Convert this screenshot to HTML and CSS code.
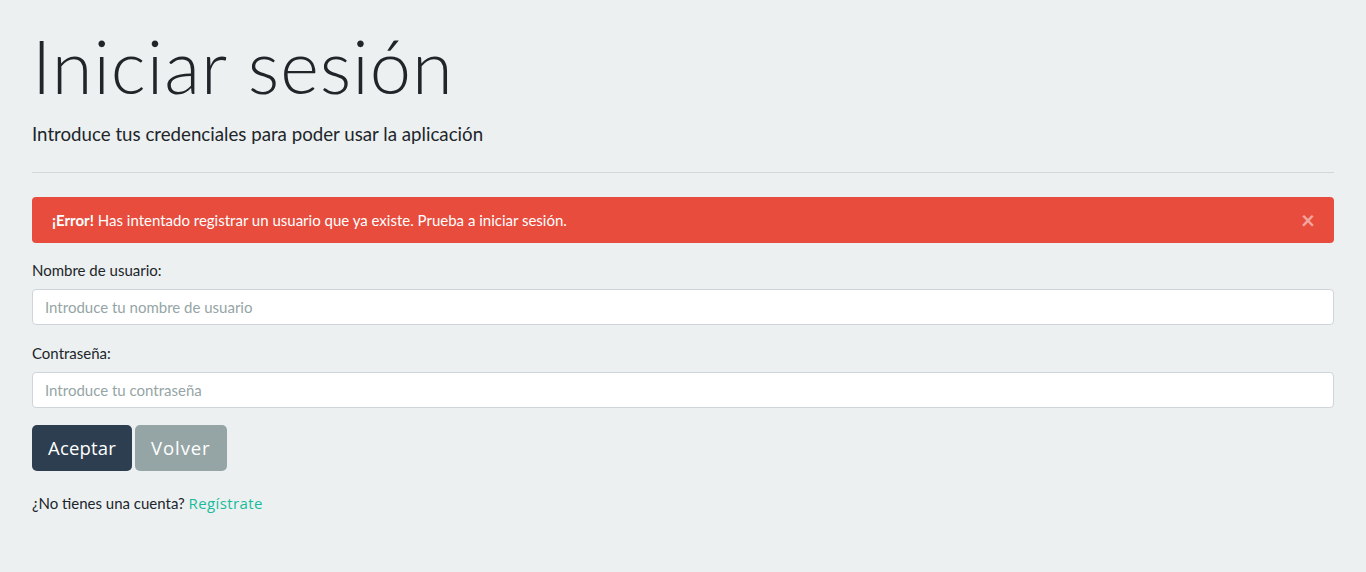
FILE: index.html
```html
<!DOCTYPE html>
<html lang="es">
<head>
<meta charset="utf-8">
<title>Iniciar sesión</title>
<link rel="stylesheet" href="styles.css">
</head>
<body>
<main class="jumbotron">
  <h1 class="title">Iniciar sesión</h1>
  <p class="lead">Introduce tus credenciales para poder usar la aplicación</p>
  <hr class="divider">
  <div class="alert">
    <span><strong>¡Error!</strong> Has intentado registrar un usuario que ya existe. Prueba a iniciar sesión.</span>
    <button class="close" type="button" aria-label="Cerrar">×</button>
  </div>
  <form class="form">
    <div class="group">
      <label class="label" for="user">Nombre de usuario:</label>
      <input class="control" id="user" type="text" placeholder="Introduce tu nombre de usuario">
    </div>
    <div class="group">
      <label class="label" for="pass">Contraseña:</label>
      <input class="control" id="pass" type="password" placeholder="Introduce tu contraseña">
    </div>
    <div class="actions">
      <button class="btn btn-primary" type="submit">Aceptar</button>
      <button class="btn btn-secondary" type="button">Volver</button>
    </div>
  </form>
  <p class="signup">¿No tienes una cuenta? <a class="link" href="#">Regístrate</a></p>
</main>
</body>
</html>
```
FILE: styles.css
```css
* { box-sizing: border-box; }
html, body { margin: 0; padding: 0; }
body {
  background: #ecf0f1;
  color: #212529;
  font-family: Lato, "Liberation Sans", sans-serif;
  font-size: 15px;
  line-height: 1.5;
}
.jumbotron {
  padding: 22px 32px 40px;
}
.title {
  margin: 0;
  font-family: Lato, sans-serif;
  font-weight: 300;
  font-size: 74px;
  line-height: 1.2;
  letter-spacing: 1px;
  color: #212529;
}
.lead {
  margin: 9px 0 0;
  font-size: 18.7px;
  font-weight: 400;
  line-height: 1.5;
}
.divider {
  margin: 24px 0 24px;
  border: 0;
  border-top: 1px solid rgba(0,0,0,0.1);
}
.alert {
  display: flex;
  align-items: center;
  justify-content: space-between;
  background: #e74c3c;
  color: #fff;
  border-radius: 4px;
  padding: 11px 20px 11px 20px;
  height: 46px;
  font-size: 15px;
}
.alert strong { font-weight: 700; }
.close {
  background: none;
  border: 0;
  padding: 0;
  color: #fff;
  opacity: .5;
  font-size: 24px;
  font-weight: 700;
  line-height: 1;
  font-family: Lato, sans-serif;
  margin-right: -1px;
}
.form { margin-top: 16px; }
.group { display: flex; flex-direction: column; margin-bottom: 16.5px; }
.label { margin-bottom: 8px; font-size: 15px; }
.control {
  height: 36px;
  padding: 6px 12px;
  font-family: Lato, sans-serif;
  font-size: 15px;
  border: 1px solid #ced4da;
  border-radius: 4px;
  background: #fff;
  color: #495057;
}
.control::placeholder { color: #95a5a6; opacity: 1; }
.actions { display: flex; gap: 3px; margin-top: 16px; }
.btn {
  height: 46px;
  border: 0;
  border-radius: 5px;
  padding: 0 16px;
  color: #fff;
  font-family: "Open Sans", sans-serif;
  font-size: 18.5px;
  font-weight: 500;
  letter-spacing: .2px;
}
.btn-primary { background: #2c3e50; }
.btn-secondary { background: #95a5a6; letter-spacing: .9px; }
.signup { margin: 21px 0 0; font-size: 15px; }
.link { color: #18bc9c; text-decoration: none; font-family: "Open Sans", sans-serif; font-size: 15px; letter-spacing: .4px; }
```
